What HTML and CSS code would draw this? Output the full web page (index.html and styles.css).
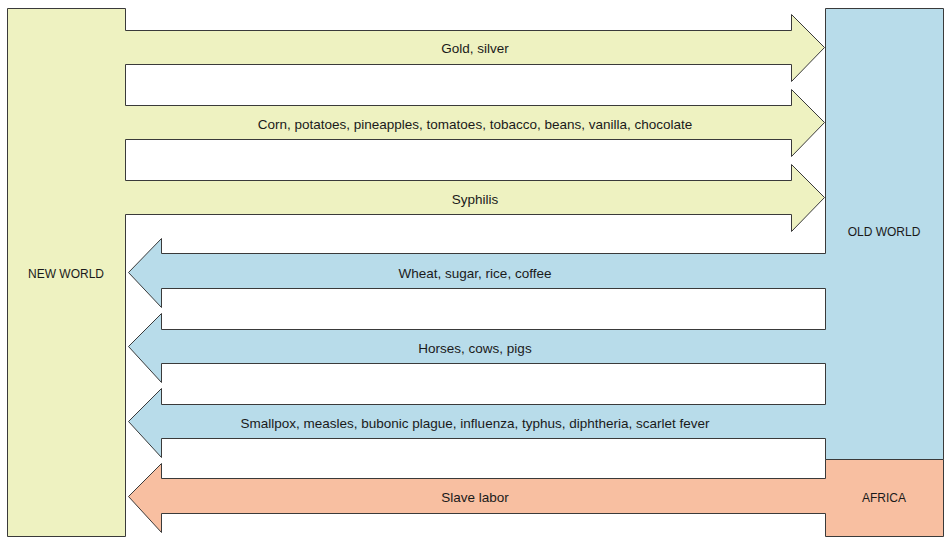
FILE: index.html
```html
<!DOCTYPE html>
<html lang="en">
<head>
<meta charset="utf-8">
<title>Columbian Exchange</title>
<link rel="stylesheet" href="styles.css">
</head>
<body>
<div class="canvas">
<svg class="diagram" width="946" height="541" viewBox="0 0 946 541" xmlns="http://www.w3.org/2000/svg">
  <path class="shape new" d="M7.5 8.5 H125.5 V30.5 H791.5 V14.5 L824.5 47.5 L791.5 81.5 V64.5 H125.5 V105.5 H791.5 V89.5 L824.5 122.5 L791.5 156.5 V139.5 H125.5 V180.5 H791.5 V164.5 L824.5 197.5 L791.5 231.5 V214.5 H125.5 V536.5 H7.5 Z"/>
  <path class="shape old" d="M825.5 8.5 H943.5 V459.5 H825.5 V438.5 H161.5 V457.5 L128.5 421.5 L161.5 388.5 V404.5 H825.5 V363.5 H161.5 V382.5 L128.5 346.5 L161.5 313.5 V329.5 H825.5 V288.5 H161.5 V307.5 L128.5 272.5 L161.5 238.5 V253.5 H825.5 Z"/>
  <path class="shape africa" d="M825.5 459.5 H943.5 V536.5 H825.5 V513.5 H161.5 V532.5 L128.5 496.5 L161.5 463.5 V478.5 H825.5 Z"/>
  <text class="label flow" x="475" y="48">Gold, silver</text>
  <text class="label flow" x="475" y="124">Corn, potatoes, pineapples, tomatoes, tobacco, beans, vanilla, chocolate</text>
  <text class="label flow" x="475" y="199">Syphilis</text>
  <text class="label flow" x="475" y="273">Wheat, sugar, rice, coffee</text>
  <text class="label flow" x="475" y="348">Horses, cows, pigs</text>
  <text class="label flow" x="475" y="423">Smallpox, measles, bubonic plague, influenza, typhus, diphtheria, scarlet fever</text>
  <text class="label flow" x="475" y="497">Slave labor</text>
  <text class="label" x="66" y="274">NEW WORLD</text>
  <text class="label" x="884" y="232">OLD WORLD</text>
  <text class="label" x="884" y="498">AFRICA</text>
</svg>
</div>
</body>
</html>
```
FILE: styles.css
```css
html, body {
  margin: 0;
  padding: 0;
  background: #ffffff;
}
.canvas {
  width: 946px;
  height: 541px;
  overflow: hidden;
}
.diagram {
  display: block;
}
.shape {
  stroke: #3a3a3a;
  stroke-width: 1;
  stroke-linejoin: miter;
}
.new {
  fill: #eef2c1;
}
.old {
  fill: #b8dcea;
}
.africa {
  fill: #f8bfa1;
}
.label {
  font-family: "Liberation Sans", Arial, sans-serif;
  font-size: 12px;
  fill: #1a1a1a;
  text-anchor: middle;
  dominant-baseline: central;
}
.flow {
  font-size: 13.5px;
}
```
